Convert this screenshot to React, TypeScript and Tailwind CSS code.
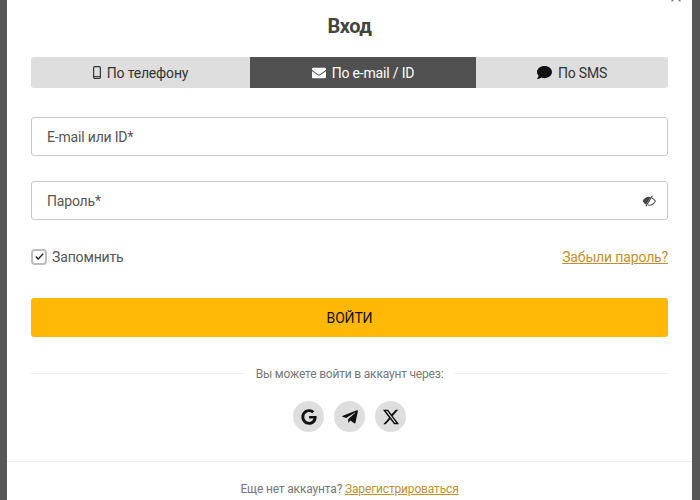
import { FaComment, FaEnvelope, FaGoogle, FaTelegramPlane } from "react-icons/fa";
import { FaXTwitter } from "react-icons/fa6";
import { X } from "lucide-react";

function PhoneIcon() {
  return (
    <svg width="8" height="13" viewBox="0 0 8 13" fill="none" className="shrink-0">
      <rect x="0.6" y="0.6" width="6.8" height="11.8" rx="1.2" stroke="#333" strokeWidth="1.2" />
      <path d="M1 10.6h6" stroke="#333" strokeWidth="1" />
    </svg>
  );
}

function EyeIcon() {
  return (
    <svg width="14" height="12" viewBox="0 0 13 11" fill="none">
      <path d="M6.5 1.6C3.9 1.6 1.7 3.3.6 5.5c.7 1.4 1.8 2.6 3.2 3.3L8 2c-.5-.2-1-.4-1.5-.4Z" fill="#444" />
      <path d="M9.3 2.8c1.3.7 2.4 1.6 3.1 2.7-1.1 2.2-3.3 3.9-5.9 3.9-.4 0-.7 0-1-.1" stroke="#555" strokeWidth="1" />
      <path d="M9.6.6 3.6 10.4" stroke="#444" strokeWidth="1.2" />
    </svg>
  );
}

function Social({ children }: { children: React.ReactNode }) {
  return (
    <div className="flex h-[31px] w-[31px] items-center justify-center rounded-full bg-[#dedede] text-[#111]">
      {children}
    </div>
  );
}

export default function App() {
  return (
    <div className="h-[500px] w-[700px] overflow-hidden bg-[#575757] px-[7px] font-['Roboto',sans-serif]">
      <div className="relative h-[500px] w-[685px] bg-white">
        <X className="absolute right-[8px] top-[-11px] text-[#777]" size={16} strokeWidth={2} />

        <div className="px-[24px] pt-[14px]">
          <h1 className="text-center text-[20px] font-bold leading-[24px] tracking-[-0.5px] text-[#444]">Вход</h1>

          <div className="mt-[19px] flex h-[31px] overflow-hidden rounded-[3px] bg-[#dedede] text-[14px] tracking-[-0.18px] text-[#333]">
            <div className="flex w-[219px] items-center justify-center gap-[6px]">
              <PhoneIcon />
              <span className="pt-px">По телефону</span>
            </div>
            <div className="flex w-[226px] items-center justify-center gap-[6px] bg-[#505050] text-white">
              <FaEnvelope size={14} />
              <span className="pt-px">По e-mail / ID</span>
            </div>
            <div className="flex flex-1 items-center justify-center gap-[6px]">
              <FaComment size={15} className="-mt-px text-[#111]" />
              <span className="pt-px">По SMS</span>
            </div>
          </div>

          <div className="mt-[29px] flex h-[39px] items-center rounded-[3px] border border-[#c8c8c8] px-[15px] pt-px text-[14px] tracking-[-0.18px] text-[#555]">
            E-mail или ID*
          </div>

          <div className="mt-[25px] flex h-[39px] items-center justify-between rounded-[3px] border border-[#c8c8c8] pl-[15px] pr-[11px] text-[14px] tracking-[-0.18px] text-[#555]">
            <span className="pt-px">Пароль*</span>
            <EyeIcon />
          </div>

          <div className="mt-[28px] flex h-[17px] items-center justify-between text-[14px] tracking-[-0.15px]">
            <div className="flex items-center gap-[5px] text-[#555]">
              <div className="flex h-[16px] w-[16px] items-center justify-center rounded-[4px] border-2 border-[#bdbdbd] bg-white">
                <svg width="9" height="7" viewBox="0 0 9 7" fill="none">
                  <path d="M.8 3.6 3.2 6 8.2.8" stroke="#222" strokeWidth="1.4" />
                </svg>
              </div>
              <span className="pt-px">Запомнить</span>
            </div>
            <a className="pt-px text-[#c1902e] underline">Забыли пароль?</a>
          </div>

          <div className="mt-[33px] flex h-[39px] items-center justify-center rounded-[3px] bg-[#ffb805] pt-px text-[14px] tracking-[-0.18px] text-[#111]">
            ВОЙТИ
          </div>

          <div className="mt-[29px] flex h-[14px] items-center gap-[12px] text-[12px] tracking-[-0.19px] text-[#777]">
            <div className="h-px flex-1 bg-[#eeeeee]" />
            <span className="pt-px">Вы можете войти в аккаунт через:</span>
            <div className="h-px flex-1 bg-[#eeeeee]" />
          </div>

          <div className="mt-[21px] flex justify-center gap-[10px]">
            <Social>
              <FaGoogle size={16} />
            </Social>
            <Social>
              <FaTelegramPlane size={18} />
            </Social>
            <Social>
              <FaXTwitter size={18} />
            </Social>
          </div>
        </div>

        <div className="mt-[29px] h-px bg-[#eeeeee]" />
        <p className="mt-[20px] text-center text-[12px] leading-[14px] tracking-[-0.16px] text-[#777]">
          Еще нет аккаунта? <a className="text-[#c1902e] underline">Зарегистрироваться</a>
        </p>
      </div>
    </div>
  );
}
